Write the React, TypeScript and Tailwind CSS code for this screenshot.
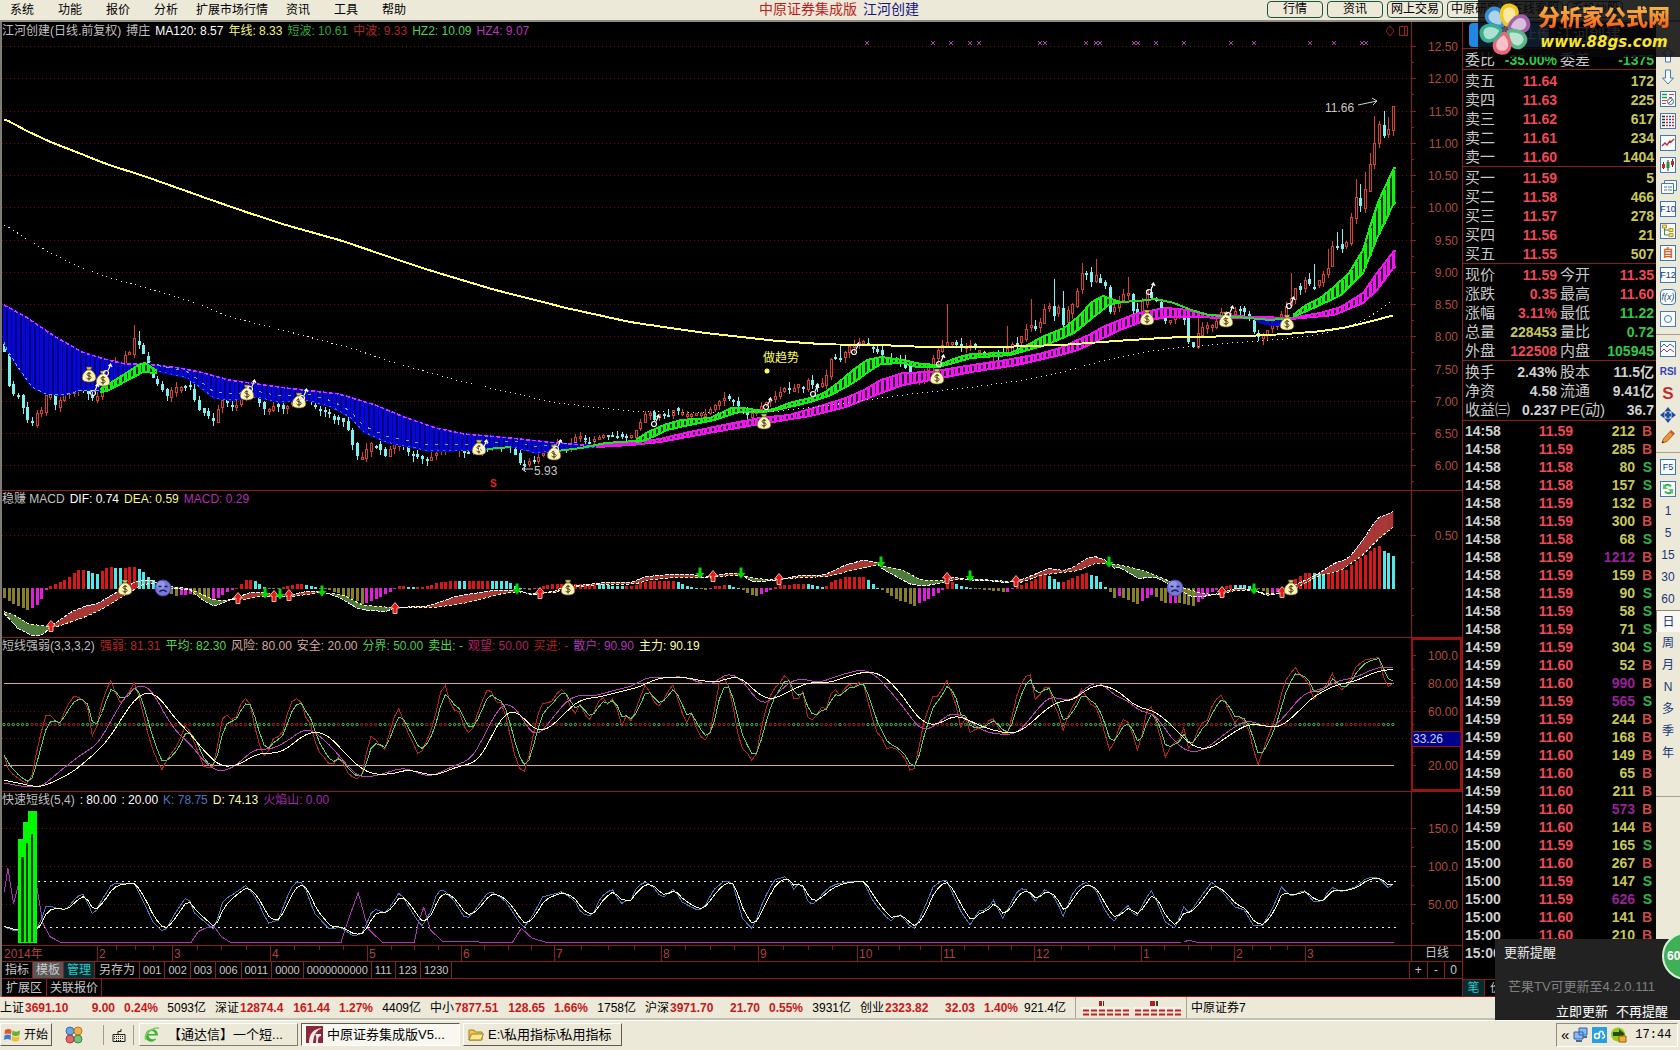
import type { ReactNode } from 'react';

type Point = [number, number];

const BAR_COUNT = 300;
const BAR_START = 4;
const BAR_STEP = 4.645;

const barX = (i: number) => BAR_START + i * BAR_STEP;

// "x,y x,y" -> points, with an optional origin and scale for the block
function parse(raw: string, x0 = 0, y0 = 0, sx = 1, sy = 1): Point[] {
  return raw
    .trim()
    .split(/\s+/)
    .map((pair) => {
      const [x, y] = pair.split(',').map(Number);
      return [x0 + x / sx, y0 + y / sy];
    });
}

function at(points: Point[], x: number): number {
  if (x <= points[0][0]) return points[0][1];
  for (let i = 1; i < points.length; i++) {
    const [x1, y1] = points[i];
    if (x <= x1) {
      const [px, py] = points[i - 1];
      return x1 === px ? y1 : py + ((y1 - py) * (x - px)) / (x1 - px);
    }
  }
  return points[points.length - 1][1];
}

const sample = (points: Point[]): number[] =>
  Array.from({ length: BAR_COUNT }, (_, i) => at(points, barX(i)));

const join = (points: Point[]) => points.map(([x, y]) => `${x.toFixed(1)},${y.toFixed(1)}`).join(' ');

const joinSeries = (ys: number[]) => join(ys.map((y, i) => [barX(i), y] as Point));

// centred three-bar mean, rounds off the corners of slow lines
const soften = (ys: number[]) => ys.map((y, i) => ((ys[i - 1] ?? y) + y + (ys[i + 1] ?? y)) / 3);

// trailing average
function smooth(ys: number[]): number[] {
  let last = ys[0];
  return ys.map((y) => {
    last = last * 0.45 + y * 0.55;
    return last;
  });
}

const noise = (i: number, seed: number) => {
  const v = Math.sin(i * 12.9898 + seed * 78.233) * 43758.5453;
  return v - Math.floor(v);
};

/* ---------- price panel ---------- */

const PRICE = parse(`4,352 8,385 14,395 20,398 23,410 27,420 32,423 37,412 42,410 46,395 50,393 55,405 60,400 65,394 80,388
  92,398 98,396 105,375 115,362 120,368 125,355 130,352 134,338 139,345 144,355 150,375 155,380 160,388 167,397 173,388
  186,387 191,387 195,402 200,412 205,413 210,417 214,422 218,408 222,400 230,405 237,405 245,388 255,395 262,408 267,411
  275,405 285,410 295,396 305,392 312,405 320,410 328,413 334,420 342,420 348,430 354,450 358,458 363,457 368,445 373,443
  380,450 386,457 392,445 400,443 405,448 410,455 418,457 424,460 432,457 440,450 450,448 460,449 467,453 475,450 483,445
  495,443 512,448 517,460 522,466 527,462 535,460 540,456 548,450 557,444 565,450 570,445 578,434 583,440 590,442 597,438
  603,435 615,436 625,438 633,435 639,425 644,415 649,412 654,420 661,412 667,418 672,410 680,412 690,415 697,413 705,415
  712,408 717,403 726,397 733,402 740,408 748,416 752,413 760,407 770,400 778,395 783,388 792,390 797,384 803,388 807,380
  815,388 820,385 825,380 830,360 835,358 839,360 845,352 850,346 857,343 863,341 870,347 880,354 890,360 900,362 908,372
  913,382 919,380 925,370 932,360 938,350 945,343 950,341 955,345 963,348 970,345 978,350 985,352 995,353 1003,355 1010,345
  1018,343 1025,330 1030,325 1034,330 1039,325 1044,310 1048,303 1053,318 1058,306 1063,325 1068,310 1072,305 1076,296
  1081,274 1086,272 1090,284 1095,275 1100,283 1104,280 1109,312 1114,308 1120,300 1125,292 1128,293 1133,312 1138,318
  1143,298 1147,290 1151,298 1156,300 1161,315 1166,322 1172,320 1178,312 1184,320 1189,345 1193,347 1198,333 1205,325
  1215,325 1220,312 1230,314 1238,310 1245,312 1250,320 1254,334 1259,338 1264,333 1270,328 1278,320 1284,310 1289,302
  1295,288 1300,290 1305,280 1310,285 1315,288 1320,278 1328,268 1333,244 1338,247 1343,249 1348,240 1352,210 1356,197
  1361,207 1366,185 1370,162 1375,140 1379,124 1384,137 1389,128 1393,106`);

// wicks that stick out well beyond the body
const SPIKES: Record<number, number> = {
  28: 8, 29: 8, 180: 10, 203: 34, 216: 20, 221: 22, 226: 24, 228: 14, 232: 8, 235: 14,
  242: 12, 257: 16, 277: 24, 282: 20, 285: 14, 287: 10, 288: 14, 291: 14, 292: 10, 293: 16, 294: 10, 295: 24, 297: 12, 298: 8,
};

const YEAR_LINE = [
  ...parse('12,356 75,393 150,430 200,450 300,493 400,527 500,565 600,603 700,640 800,675 950,720 1080,767 1200,810 1380,868 1560,917', 0, 0, 2.8, 3),
  ...parse('0,920 200,967 400,998 600,1022 740,1033 900,1035 1000,1040 1200,1042 1400,1035 1560,1023', 560, 0, 2.8, 3),
  ...parse('0,1022 150,1012 350,1008 450,1003 550,995 620,985 700,965 768,945', 1120, 0, 2.8, 3),
];

const MA120 = [
  ...parse('12,673 100,735 200,790 300,832 400,860 550,910 640,950 800,993 985,1045 1100,1087 1300,1147 1440,1180 1540,1205', 0, 0, 2.8, 3),
  ...parse('0,1210 120,1225 210,1234 400,1238 600,1235 760,1215 860,1200 1000,1180 1150,1162 1300,1140 1400,1118 1500,1088', 560, 0, 2.8, 3),
  ...parse('0,1070 120,1048 300,1030 450,1018 550,1005 640,980 700,950 768,897', 1120, 0, 2.8, 3),
];

interface Band {
  from: number;
  to: number;
  top: Point[];
  bottom: Point[];
}

const BLUE_TOP = parse('4,305 26,317 54,336 75,348 82,352 104,359 125,364 146,364 179,368 200,372 229,380 250,383 286,388 339,394 375,405 404,417 436,428 464,434 500,437 557,443 596,446');

const BLUE_BANDS: Band[] = [
  { from: 4, to: 140, top: BLUE_TOP, bottom: parse('4,342 7,350 18,367 32,387 46,394 64,395 82,390 100,391 122,377 140,366') },
  {
    from: 148,
    to: 596,
    top: BLUE_TOP,
    bottom: parse('148,366 161,372 186,377 200,387 214,398 232,400 257,397 279,402 307,400 332,407 350,417 364,432 386,442 411,447 429,451 482,450 514,447 536,453 557,450 596,447'),
  },
  { from: 1252, to: 1288, top: parse('1252,317 1291,319'), bottom: parse('1252,318 1262,323 1272,325 1282,325 1291,320') },
];

const GREEN_BANDS: Band[] = [
  { from: 100, to: 157, top: parse('100,389 112,382 128,372 138,365 145,363 157,371'), bottom: parse('100,392 107,391 128,380 143,372 157,373') },
  {
    from: 636,
    to: 1120,
    top: parse('636,440 646,433 664,425 681,420 710,418 721,413 731,408 742,408 764,411 774,409 789,403 810,398 824,393 839,382 853,370 867,360 881,357 903,360 921,364 939,365 956,358 971,354 1010,353 1024,347 1042,337 1064,328 1078,317 1092,302 1103,296 1120,302'),
    bottom: parse('636,442 646,440 667,430 689,425 714,420 739,412 764,412 781,409 810,402 831,395 853,383 871,370 881,364 903,363 917,367 939,367 971,358 1010,355 1028,350 1046,345 1074,333 1096,315 1110,304 1120,303'),
  },
  {
    from: 1293,
    to: 1396,
    top: parse('1293,315 1306,305 1320,298 1334,287 1349,273 1363,250 1370,227 1379,200 1394,168'),
    bottom: parse('1293,317 1320,305 1341,295 1363,273 1377,238 1394,203'),
  },
];

const MAGENTA_BANDS: Band[] = [
  {
    from: 596,
    to: 1396,
    top: parse('596,446 631,443 660,439 685,433 714,427 739,422 760,418 789,415 817,407 846,398 864,390 881,380 903,373 931,372 960,367 1006,360 1039,354 1060,348 1089,335 1103,327 1120,320 1138,313 1166,308 1188,310 1209,315 1256,317 1291,318 1320,313 1341,307 1363,293 1377,273 1394,251'),
    bottom: parse('596,447 631,445 660,442 714,432 760,424 810,416 846,407 881,393 903,385 931,380 971,372 1017,365 1060,355 1078,350 1120,330 1141,322 1166,317 1195,317 1224,318 1291,319 1334,315 1363,303 1377,290 1394,267'),
  },
];

const GREEN_THIN = [
  '487,449 511,447',
  '557,451 581,448 606,443 636,441',
  '1120,302 1138,301 1156,299 1174,303 1191,310 1209,315 1238,317 1270,320 1291,318',
];

function BandBars({ band, color, shade }: { band: Band; color: string; shade: string }) {
  const idx = Array.from({ length: BAR_COUNT }, (_, i) => i).filter((i) => barX(i) >= band.from - 1 && barX(i) <= band.to);
  const inner = (line: Point[]) => line.filter(([x]) => x > band.from && x < band.to);
  const top: Point[] = [[band.from, at(band.top, band.from)], ...inner(band.top), [band.to, at(band.top, band.to)]];
  const bottom: Point[] = [[band.from, at(band.bottom, band.from)], ...inner(band.bottom), [band.to, at(band.bottom, band.to)]];
  return (
    <g>
      <polygon points={join([...top, ...[...bottom].reverse()])} fill={shade} />
      {idx.map((i) => {
        const y = at(band.top, barX(i));
        return <rect key={i} x={barX(i) - 1} y={y} width={3} height={Math.max(1, at(band.bottom, barX(i)) - y)} fill={color} />;
      })}
      <polyline points={join(top)} fill="none" stroke={color} strokeWidth={2} />
      <polyline points={join(bottom)} fill="none" stroke={color} strokeWidth={2} />
    </g>
  );
}

function Candles() {
  const closes = sample(PRICE);
  return (
    <g shapeRendering="crispEdges" strokeWidth={1}>
      {closes.map((close, i) => {
        const open = (i ? closes[i - 1] : close - 12) + (noise(i, 5) - 0.5) * 5;
        const x = Math.round(barX(i)) + 0.5;
        const top = Math.min(open, close);
        const height = Math.max(2, Math.abs(open - close));
        const high = top - noise(i, 1) * 6 - (SPIKES[i] ?? 0);
        const low = top + height + noise(i, 2) * 6;
        if (close > open) {
          return (
            <g key={i}>
              <path d={`M${x} ${high}V${low}`} stroke="#7df2f2" />
              <rect x={x - 1.5} y={top} width={3} height={height} fill="#7df2f2" />
            </g>
          );
        }
        return (
          <g key={i} stroke="#d84030" fill="#000">
            <path d={`M${x} ${high}V${low}`} />
            <rect x={x - 1} y={top} width={2} height={height} />
          </g>
        );
      })}
    </g>
  );
}

function MoneyBag({ x, y }: { x: number; y: number }) {
  return (
    <g transform={`translate(${x} ${y})`}>
      <path d="M-3-8h6l-1.500 3h-3z" fill="#d8c468" stroke="#5a4a10" strokeWidth=".6" />
      <path d="M-2-5h4c2.500 1.500 4.800 4.500 4.800 7.500C6.800 6 4 7 0 7s-6.800-1-6.800-4.500C-6.800-.500-4.500-3.500-2-5z" fill="#fdf3b4" stroke="#6b5a18" strokeWidth=".7" />
      <path d="M2.200-1.200C1.500-2.200-2-2.400-2-.4c0 1.800 4.200.8 4.200 2.800C2.200 4.400-1.600 4.400-2.400 3M0-3v8.500" fill="none" stroke="#3c3410" strokeWidth="1" />
    </g>
  );
}

function MaleSign({ x, y }: { x: number; y: number }) {
  return (
    <g transform={`translate(${x} ${y})`} fill="none" stroke="#fff" strokeWidth="1.200">
      <circle cx="-1" cy="3" r="2.500" />
      <path d="M1 0.500L3.500-5M1.500-4L3.500-6L5-3" />
    </g>
  );
}

function SadFace({ x, y }: { x: number; y: number }) {
  return (
    <g transform={`translate(${x} ${y})`}>
      <circle r="8" fill="#7878dc" stroke="#4a4aa0" />
      <circle cx="-2" cy="-3" r="4" fill="#a8a8f4" opacity=".6" />
      <path d="M-4.500-1.500h3M1.500-1.500h3M-3.500 4c1.500-2.400 5.500-2.400 7 0" fill="none" stroke="#1c1c50" strokeWidth="1.400" />
    </g>
  );
}

function Arrow({ x, y, up }: { x: number; y: number; up?: boolean }) {
  return up ? (
    <path transform={`translate(${x} ${y})`} d="M0-5.500L4.500 0H2V5.500H-2V0H-4.500z" fill="#e81818" stroke="#f0b0a0" />
  ) : (
    <path transform={`translate(${x} ${y})`} d="M0 5.500L4.500 0H1.500V-5.500H-1.500V0H-4.500z" fill="#00d800" />
  );
}

const GridLines = ({ levels }: { levels: number[] }) => (
  <g shapeRendering="crispEdges" stroke="#6c1212" strokeDasharray="1 3">
    {levels.map((y) => (
      <path key={y} d={`M2 ${y}H1411`} />
    ))}
  </g>
);

const PRICE_LEVELS = Array.from({ length: 14 }, (_, i) => ({ y: Math.round(46 + i * 32.26) + 0.5, label: (12.5 - i * 0.5).toFixed(2) }));
// the last step to 6.00 sits on the panel's bottom tick
const PRICE_TICKS = PRICE_LEVELS.map((l) => l.y + 16);

const CROSS_X = [867, 933, 951, 970, 979, 1040, 1045, 1086, 1096, 1100, 1134, 1138, 1156, 1184, 1231, 1254, 1310, 1334, 1362, 1366];

const PRICE_BAGS = parse('89,375 103,379 247,393 299,401 479,448 554,453 764,422 937,377 1147,318 1226,320 1287,323');
const MALE_SIGNS = parse('94,390 107,370 251,386 303,395 483,446 557,446 655,421 767,404 814,391 855,349 940,361 1150,289 1229,312 1290,303');

function PriceChart() {
  return (
    <Plot box="2 40 1409 450">
      <GridLines levels={PRICE_LEVELS.map((l) => l.y)} />
      {CROSS_X.map((x) => (
        <path key={x} d={`M${x - 2} 41l4 4m0-4l-4 4`} stroke="#b040b8" />
      ))}
      <Candles />
      <g shapeRendering="crispEdges">
        {BLUE_BANDS.map((b) => (
          <BandBars key={b.from} band={b} color="#0606d8" shade="#000078" />
        ))}
        <polyline points={join(BLUE_TOP)} fill="none" stroke="#d838e0" strokeWidth="1.500" strokeDasharray="4 2" />
        <polyline points={join(BLUE_BANDS[0].bottom)} fill="none" stroke="#58b8d8" strokeDasharray="3 3" />
        <polyline points={join(BLUE_BANDS[1].bottom.map(([x, y]) => [x, y - 6]))} fill="none" stroke="#58b8d8" strokeDasharray="3 7" />
        <polyline points={join(BLUE_BANDS[1].bottom)} fill="none" stroke="#4070b8" strokeDasharray="2 4" />
        {MAGENTA_BANDS.map((b) => (
          <BandBars key={b.from} band={b} color="#f014f0" shade="#300030" />
        ))}
        {GREEN_BANDS.map((b) => (
          <BandBars key={b.from} band={b} color="#14f014" shade="#003000" />
        ))}
        {GREEN_THIN.map((p) => (
          <polyline key={p} points={p} fill="none" stroke="#28dc28" strokeWidth="2" />
        ))}
        <polyline points={joinSeries(soften(sample(YEAR_LINE)))} fill="none" stroke="#ffff70" strokeWidth="2" />
        <polyline points={joinSeries(soften(sample(MA120)))} fill="none" stroke="#e8e8e8" strokeDasharray="1 4" />
      </g>
      {PRICE_BAGS.map(([x, y]) => (
        <MoneyBag key={x} x={x} y={y} />
      ))}
      {MALE_SIGNS.map(([x, y]) => (
        <MaleSign key={x} x={x} y={y} />
      ))}
      <path d="M1358 105L1377 101M1372 98l5 3-4 4M522 469h11M522 469l4-3M522 469l4 3" stroke="#d0d0d0" fill="none" />
      <circle cx="767" cy="371" r="2.500" fill="#ffff50" />
      <g className="text-[12px]">
        <text x="1325" y="112" fill="#c8c8c8">11.66</text>
        <text x="534" y="475" fill="#c8c8c8">5.93</text>
        <text x="763" y="362" fill="#ffff60">做趋势</text>
      </g>
      <text x="490" y="487" fill="#e82020" className="text-[10px] font-bold">S</text>
    </Plot>
  );
}

/* ---------- MACD panel ---------- */

const MACD_BARS = [
  ...parse('12,-10 40,-17 75,-22 100,-18 120,-9 130,0 150,4 180,8 220,19 235,19 250,17 270,14 290,19 310,22 330,20 375,22 400,17 420,10 445,5 470,-3 485,-8 540,-6 580,-12 600,-12 640,-3 660,0 690,9 710,9 730,3 760,-2 800,2 840,5 880,2 900,-1 920,-2 960,-7 1000,-13 1015,-16 1060,-10 1090,-4 1120,3 1160,1 1190,2 1230,6 1270,8 1300,7 1370,8 1420,7 1445,2 1480,-2 1500,-1 1520,3 1560,5', 0, 0, 2.8),
  ...parse('0,5 100,5 170,2 210,3 240,7 320,8 350,3 385,0 415,-3 430,2 465,4 500,0 545,-9 590,-2 610,3 680,5 740,1 760,7 805,12 850,12 880,3 900,-2 930,-9 990,-18 1030,-11 1070,-2 1090,7 1130,2 1160,-1 1250,-4 1280,2 1320,8 1360,15 1400,5 1470,16 1500,12 1530,0 1550,-10', 560, 0, 2.8),
  ...parse('0,-8 50,-16 90,-6 120,-15 160,-15 205,-18 250,-5 280,0 310,4 360,3 380,0 410,-5 450,-4 470,5 520,16 570,14 600,17 640,19 650,25 690,35 725,43 740,37 768,32', 1120, 0, 2.8),
];

const DIF = [
  ...parse('12,790 50,835 90,857 120,855 140,832 200,785 240,768 270,762 330,725 380,695 420,690 450,702 480,716 530,718 570,752 600,769 640,751 700,728 745,728 800,740 850,725 900,725 950,742 1005,778 1080,785 1105,773 1200,768 1280,738 1380,722 1450,721 1490,735 1560,722', 0, 350, 2.8, 3),
  ...parse('0,712 40,708 130,697 200,697 240,680 320,672 380,675 400,683 460,672 500,670 540,695 600,692 680,675 740,675 800,645 850,630 890,638 900,655 980,702 1020,708 1075,697 1100,682 1150,690 1200,692 1250,698 1290,690 1370,655 1410,662 1440,650 1475,625 1500,620 1530,632 1550,655', 560, 350, 2.8, 3),
  ...parse('0,652 50,685 100,682 150,710 200,740 230,740 270,732 320,716 370,718 410,736 450,730 470,715 550,675 600,640 640,625 680,570 720,505 750,492 768,482', 1120, 350, 2.8, 3),
];

const DEA = [
  ...parse('12,785 40,795 80,822 130,829 160,830 240,800 290,775 350,735 400,703 450,698 480,710 530,716 600,750 640,750 690,748 730,738 800,741 850,735 900,727 960,735 1015,765 1100,773 1220,772 1300,760 1400,732 1450,725 1490,731 1560,727', 0, 350, 2.8, 3),
  ...parse('0,716 40,711 130,702 210,702 250,690 330,682 400,684 500,675 545,685 600,690 680,682 750,680 820,660 890,645 960,660 1010,690 1070,692 1100,690 1150,686 1200,690 1250,694 1290,697 1350,675 1400,668 1450,662 1500,640 1530,640', 560, 350, 2.8, 3),
  ...parse('0,645 60,660 120,685 180,715 230,730 270,735 320,722 370,720 410,732 450,731 480,722 550,680 620,660 680,615 720,570 768,528', 1120, 350, 2.8, 3),
];

const BUY_ARROWS = parse('51,626 238,598 274,596 289,595 395,608 540,593 713,576 779,579 947,578 1016,581 1222,592 1282,592');
const SELL_ARROWS = parse('265,593 280,594 322,591 517,589 700,573 741,573 881,562 970,576 1109,562 1254,589');

function MacdChart() {
  const bars = sample(MACD_BARS);
  const dif = sample(DIF);
  const dea = sample(DEA);
  return (
    <Plot box="2 507 1409 130">
      <GridLines levels={[535.5]} />
      {dif.slice(1).map((y, i) => (
        <polygon
          key={i}
          points={`${barX(i)},${dif[i]} ${barX(i + 1) + 0.5},${y} ${barX(i + 1) + 0.5},${dea[i + 1]} ${barX(i)},${dea[i]}`}
          fill={y < dea[i + 1] ? '#a83838' : '#507c40'}
        />
      ))}
      <g shapeRendering="crispEdges">
        {bars.map((h, i) => {
          const rising = h >= (i ? bars[i - 1] : h + 1);
          const color = h >= 0 ? (rising ? '#d81818' : '#50e8e8') : rising ? '#e020d8' : '#888028';
          const size = Math.max(1, Math.abs(h));
          return <rect key={i} x={barX(i) - 1} y={h >= 0 ? 588.5 - size : 588} width={3} height={size} fill={color} />;
        })}
        <polyline points={joinSeries(dea)} fill="none" stroke="#ffff90" strokeDasharray="3 2" />
        <polyline points={joinSeries(dif)} fill="none" stroke="#f4f4f4" strokeDasharray="4 1" />
      </g>
      {BUY_ARROWS.map(([x, y]) => (
        <Arrow key={x} x={x} y={y} up />
      ))}
      {SELL_ARROWS.map(([x, y]) => (
        <Arrow key={x} x={x} y={y} />
      ))}
      {[125, 568, 1291].map((x) => (
        <MoneyBag key={x} x={x} y={588} />
      ))}
      {[163, 1175].map((x) => (
        <SadFace key={x} x={x} y={588} />
      ))}
    </Plot>
  );
}

/* ---------- strength panel ---------- */

const STRENGTH = [
  ...parse('10,345 20,395 50,425 65,435 75,370 85,300 103,212 115,235 130,252 145,200 163,165 180,180 190,195 200,290 212,255 225,170 243,117 255,175 263,190 280,160 293,125 305,180 320,270 335,340 353,390 365,355 385,318 395,290 405,250 420,295 435,350 448,392 460,375 468,385 478,270 487,223 498,225 505,240 515,230 530,172 542,180 550,220 560,300 578,355 590,315 600,280 608,295 618,270 628,210 640,172 655,182 665,230 680,260 690,330 705,350 717,372 727,372 740,345 755,395 775,420 790,400 798,340 810,278 822,310 840,330 855,240 870,203 885,270 900,310 913,352 930,300 945,250 958,160 973,130 983,210 1003,215 1015,285 1030,265 1045,200 1065,137 1080,185 1095,190 1105,250 1120,340 1135,398 1145,392 1155,330 1165,260 1178,190 1200,188 1220,145 1235,165 1250,237 1260,180 1270,215 1287,245 1300,190 1312,170 1325,195 1340,165 1350,268 1365,225 1375,243 1390,190 1402,140 1410,130 1420,180 1437,200 1455,155 1468,130 1480,200 1495,250 1505,215 1518,270 1533,305 1545,285 1555,220 1565,130', 0, 640, 2.178, 3),
  ...parse('0,125 12,112 22,150 32,230 45,325 55,328 68,363 80,340 92,250 105,180 118,145 130,130 147,92 157,175 170,178 180,150 190,230 205,243 220,200 230,212 240,165 252,148 260,170 280,130 290,145 310,118 325,200 340,275 350,285 362,325 380,322 393,340 405,360 412,390 422,395 432,330 445,240 465,165 478,170 493,115 505,160 515,200 525,265 533,225 545,278 560,265 575,260 593,230 605,260 622,295 632,260 640,200 650,150 660,120 675,93 685,180 700,160 714,125 725,190 735,210 747,272 760,220 775,185 790,140 803,190 818,200 830,240 848,330 862,300 872,250 882,233 895,260 908,335 920,280 930,210 940,200 955,270 970,352 985,310 1000,300 1008,250 1020,325 1035,300 1045,250 1060,245 1075,185 1092,165 1105,200 1120,250 1133,230 1148,250 1160,320 1173,378 1185,320 1200,270 1215,210 1228,130 1240,105 1253,82 1265,110 1280,120 1295,185 1305,150 1320,140 1335,97 1345,140 1355,150 1370,130 1385,80 1405,60 1435,52 1445,110 1455,140 1465,130', 720, 640, 2.178, 3),
];

const MAIN_FORCE = [
  ...parse('10,420 85,443 110,430 160,395 225,318 250,270 285,190 310,158 330,155 350,175 380,235 410,275 440,325 470,370 490,382 520,375 560,340 600,340 625,328 655,290 685,273 715,285 745,330 780,380 810,403 850,403 890,388 920,400 950,407 985,385 1040,365 1060,320 1090,235 1115,208 1130,215 1155,260 1178,278 1210,250 1240,205 1265,178 1310,170 1350,155 1390,143 1430,115 1480,110 1530,122 1565,130', 0, 640, 2.178, 3),
  ...parse('0,122 35,108 55,120 75,155 110,182 150,155 190,128 240,128 280,108 325,92 360,110 400,170 430,235 465,260 490,240 515,225 540,240 580,265 635,283 665,265 700,220 735,183 770,182 800,145 830,132 870,155 905,200 945,212 980,250 1020,310 1050,330 1075,320 1120,275 1155,250 1185,257 1215,265 1245,235 1290,172 1340,135 1380,125 1435,92 1465,88', 720, 640, 2.178, 3),
];

const RETAIL = [
  ...parse('10,428 50,440 90,442 120,405 175,345 215,312 250,220 285,145 310,132 330,145 355,215 385,280 415,310 440,360 475,398 510,382 555,325 590,330 630,300 665,262 700,290 735,340 770,400 790,415 830,403 880,382 935,412 985,380 1030,355 1060,270 1090,195 1105,182 1130,215 1165,300 1200,240 1235,180 1260,163 1290,170 1340,150 1375,140 1410,110 1450,115 1485,108 1545,138 1565,125', 0, 640, 2.178, 3),
  ...parse('0,105 25,100 50,120 75,175 98,198 130,155 150,125 180,115 215,130 250,110 310,87 340,105 375,160 410,220 435,270 450,273 480,245 505,213 530,230 575,275 620,285 650,280 690,210 718,165 745,180 775,180 795,140 828,123 860,170 890,180 915,220 945,215 980,290 1010,330 1035,340 1065,320 1110,270 1150,238 1200,268 1230,230 1270,160 1310,148 1345,122 1380,115 1435,80 1465,82', 720, 640, 2.178, 3),
];

function StrengthChart() {
  const fast = sample(STRENGTH);
  const average = smooth(fast);
  return (
    <Plot box="2 654 1409 137">
      <GridLines levels={[711.5, 738.5]} />
      <path d="M4 683.500H1394M4 765.500H1394" stroke="#dca0a0" strokeWidth="1" shapeRendering="crispEdges" />
      {fast.map((y, i) => (
        <circle key={i} cx={barX(i)} cy="724.500" r="1.200" fill="none" stroke={y < average[i] ? '#b83030' : '#50d050'} strokeWidth=".9" />
      ))}
      <g fill="none" shapeRendering="crispEdges">
        <polyline points={joinSeries(fast)} stroke="#c02018" />
        <polyline points={joinSeries(average)} stroke="#50d850" />
        <polyline points={joinSeries(soften(soften(sample(RETAIL))))} stroke="#c040c0" />
        <polyline points={joinSeries(soften(soften(sample(MAIN_FORCE))))} stroke="#ffffa0" />
      </g>
    </Plot>
  );
}

/* ---------- fast KD panel ---------- */

const K_LINE = [
  ...parse('12,680 40,692 100,690 115,660 130,615 160,625 185,630 215,590 235,582 262,650 285,600 315,550 375,550 395,590 430,670 460,698 490,640 525,585 545,640 600,690 625,600 650,585 690,555 720,600 750,670 780,660 800,600 825,545 850,550 880,640 925,690 950,680 990,708 1015,700 1045,625 1080,640 1120,575 1150,630 1180,680 1205,640 1225,575 1240,567 1270,600 1305,660 1330,630 1370,572 1400,590 1420,610 1465,685 1490,650 1520,590 1560,580', 0, 700, 2.8, 3),
  ...parse('0,572 40,600 60,640 90,650 110,600 125,580 155,565 165,618 185,600 195,610 215,560 240,545 265,565 285,595 320,565 340,605 380,628 400,628 430,570 465,538 485,555 510,655 540,688 570,600 600,540 635,528 655,570 675,540 690,600 710,615 740,575 765,555 805,545 850,545 880,610 925,665 950,640 990,690 1010,650 1045,560 1080,535 1120,630 1148,675 1175,630 1195,630 1213,600 1240,655 1285,565 1310,570 1330,605 1360,565 1390,600 1408,650 1440,570 1470,545 1500,570 1530,640 1550,665', 560, 700, 2.8, 3),
  ...parse('0,640 22,615 45,655 70,600 88,572 110,620 125,665 155,685 178,620 195,640 220,600 258,545 290,580 325,625 345,625 375,680 400,675 430,620 452,560 480,590 515,570 545,608 570,600 590,560 620,575 660,560 690,535 720,530 755,568 765,550', 1120, 700, 2.8, 3),
];

const FLAME = [
  ...parse('12,575 22,505 38,612 50,560 100,540 120,670 140,710 170,727 535,727 555,695 580,682 600,680 620,710 645,727 955,727 975,660 1003,578 1030,685 1070,727 1160,727 1173,660 1187,622 1205,690 1240,725 1435,727 1460,685 1490,715 1530,727', 0, 700, 2.8, 3),
  ...parse('0,727 180,726 193,720 215,727 766,727', 1120, 700, 2.8, 3),
];

function FastChart() {
  const k = sample(K_LINE);
  const d = smooth(k);
  return (
    <Plot box="2 808 1409 137">
      <GridLines levels={[828.5, 866.5, 904.5]} />
      <g shapeRendering="crispEdges" fill="none">
        <path d="M38 881.500H1396M38 927.500H1396" stroke="#f0f0f0" strokeDasharray="2 4" />
        <polyline points={join(FLAME)} stroke="#b030b8" />
        <polyline points={joinSeries(k)} stroke="#4878c0" />
        <polyline points={joinSeries(d)} stroke="#f8ffa8" />
        <path d="M18 943V839H23V822H28V811H37V943z" fill="#00f800" />
        <path d="M21 942V857h3v85zM26 942V843h2v99zM31 942V834h2v108z" fill="#003c00" />
      </g>
    </Plot>
  );
}

/* ---------- panel frame ---------- */

function Plot({ box, children }: { box: string; children: ReactNode }) {
  return (
    <svg viewBox={box} preserveAspectRatio="none" className="block min-h-0 w-full flex-1 overflow-hidden">
      {children}
    </svg>
  );
}

interface Label {
  y: number;
  label: string;
}

function Axis({ top, height, labels, minors = [], active }: { top: number; height: number; labels: Label[]; minors?: number[]; active?: boolean }) {
  return (
    <svg viewBox={`0 ${top} 51 ${height}`} preserveAspectRatio="none" className="block h-full w-[51px] shrink-0">
      {active ? (
        <rect x="1" y={top + 1} width="49" height={height - 2} fill="none" stroke="#a01010" strokeWidth="2" />
      ) : (
        <path d={`M.5 ${top}V${top + height}`} stroke="#8c1c1c" />
      )}
      {minors.map((y) => (
        <path key={y} d={`M0 ${y}h3`} stroke="#8c1c1c" />
      ))}
      {labels.map(({ y, label }) => (
        <g key={label}>
          <path d={`M0 ${y}h5`} stroke="#8c1c1c" />
          <text x="47" y={y + 4} textAnchor="end" fill="#b04c3c" className="text-[12px]">
            {label}
          </text>
        </g>
      ))}
      {active && (
        <g>
          <rect x="1" y="731.500" width="49" height="15" fill="#00008c" stroke="#a01010" />
          <text x="2" y="743" fill="#c8d4f0" className="text-[12px]">
            33.26
          </text>
        </g>
      )}
    </svg>
  );
}

interface Legend {
  text: string;
  color: string;
}

function Panel({ legend, chart, axis, extra, tall }: { legend: Legend[]; chart: ReactNode; axis: ReactNode; extra?: ReactNode; tall?: boolean }) {
  return (
    <section className="flex min-h-0 border-b border-[#8c1c1c]">
      <div className="flex min-h-0 min-w-0 flex-1 flex-col">
        <div className={`flex shrink-0 items-center gap-[5px] whitespace-nowrap leading-none ${tall ? 'h-[18px]' : 'h-4'}`}>
          {legend.map((item) => (
            <span key={item.text} className={item.color}>
              {item.text}
            </span>
          ))}
          {extra}
        </div>
        {chart}
      </div>
      {axis}
    </section>
  );
}

const PRICE_LEGEND: Legend[] = [
  { text: '江河创建(日线.前复权)', color: 'text-[#c0c0c0]' },
  { text: '搏庄', color: 'text-[#c0c0c0]' },
  { text: 'MA120: 8.57', color: 'text-white' },
  { text: '年线: 8.33', color: 'text-[#f4f480]' },
  { text: '短波: 10.61', color: 'text-[#30a838]' },
  { text: '中波: 9.33', color: 'text-[#b02820]' },
  { text: 'HZ2: 10.09', color: 'text-[#50d050]' },
  { text: 'HZ4: 9.07', color: 'text-[#b838b8]' },
];

const MACD_LEGEND: Legend[] = [
  { text: '稳赚 MACD', color: 'text-[#c0c0c0]' },
  { text: 'DIF: 0.74', color: 'text-white' },
  { text: 'DEA: 0.59', color: 'text-[#f4f490]' },
  { text: 'MACD: 0.29', color: 'text-[#b030b0]' },
];

const STRENGTH_LEGEND: Legend[] = [
  { text: '短线强弱(3,3,3,2)', color: 'text-[#c0c0c0]' },
  { text: '强弱: 81.31', color: 'text-[#b82820]' },
  { text: '平均: 82.30', color: 'text-[#50d850]' },
  { text: '风险: 80.00', color: 'text-[#d8a8a0]' },
  { text: '安全: 20.00', color: 'text-[#d8a8a0]' },
  { text: '分界: 50.00', color: 'text-[#50c850]' },
  { text: '卖出: -', color: 'text-[#50d850]' },
  { text: '观望: 50.00', color: 'text-[#b02060]' },
  { text: '买进: -', color: 'text-[#b02020]' },
  { text: '散户: 90.90', color: 'text-[#b038b8]' },
  { text: '主力: 90.19', color: 'text-[#ffffa0]' },
];

const FAST_LEGEND: Legend[] = [
  { text: '快速短线(5,4)', color: 'text-[#c0c0c0]' },
  { text: ': 80.00', color: 'text-white' },
  { text: ': 20.00', color: 'text-white' },
  { text: 'K: 78.75', color: 'text-[#4878c0]' },
  { text: 'D: 74.13', color: 'text-[#ffffa0]' },
  { text: '火焰山: 0.00', color: 'text-[#a828b0]' },
];

const MONTHS: [number, string][] = [
  [97, '2'], [172, '3'], [270, '4'], [367, '5'], [461, '6'], [554, '7'], [661, '8'], [758, '9'],
  [857, '10'], [941, '11'], [1034, '12'], [1141, '1'], [1234, '2'], [1305, '3'],
];

function DateAxis() {
  return (
    <div className="flex h-4 shrink-0 border-b border-[#8c1c1c]">
      <svg viewBox="2 946 1409 15" preserveAspectRatio="none" className="block h-full min-w-0 flex-1">
        <text x="4" y="958" fill="#b04040" className="text-[12px]">
          2014年
        </text>
        {MONTHS.map(([x, label], i) => {
          const next = MONTHS[i + 1]?.[0] ?? x;
          return (
            <g key={x} stroke="#8c1c1c">
              <path d={`M${x + 0.5} 946v15`} />
              {next > x && [1, 2, 3].map((n) => <path key={n} d={`M${Math.round(x + ((next - x) * n) / 4) + 0.5} 946v4`} />)}
              <text x={x + 2} y="958" fill="#b04040" stroke="none" className="text-[12px]">
                {label}
              </text>
            </g>
          );
        })}
      </svg>
      <div className="w-[51px] border-l border-[#8c1c1c] text-center leading-[15px] text-[#c8c8c8]">日线</div>
    </div>
  );
}

const TEMPLATES = ['001', '002', '003', '006', '0011', '0000', '0000000000', '111', '123', '1230'];

function TabRows() {
  const cell = 'border-r border-[#8c1c1c] leading-4';
  return (
    <>
      <div className="flex h-[17px] shrink-0 border-b border-[#8c1c1c] text-[#c8c8c8]">
        <button className={`${cell} px-[3px]`}>指标</button>
        <button className={`${cell} bg-[#585858] px-[3px]`}>模板</button>
        <button className={`${cell} bg-[#062c30] px-[3px] text-[#30c8c8]`}>管理</button>
        <button className={`${cell} px-1`}>另存为</button>
        {TEMPLATES.map((name) => (
          <button key={name} className={`${cell} px-[3px] text-[11px]`}>
            {name}
          </button>
        ))}
        <div className="ml-auto flex w-[53px] border-l border-[#8c1c1c]">
          <button className={`${cell} flex-1`}>+</button>
          <button className={`${cell} flex-1`}>-</button>
          <button className="flex-1 leading-4">0</button>
        </div>
      </div>
      <div className="flex h-[18px] shrink-0 border-b border-[#a01010] text-[#c8c8c8]">
        <button className={`${cell} px-1`}>扩展区</button>
        <button className={`${cell} px-[3px]`}>关联报价</button>
      </div>
    </>
  );
}

/* ---------- quote panel ---------- */

const ASKS = [['卖五', '11.64', '172'], ['卖四', '11.63', '225'], ['卖三', '11.62', '617'], ['卖二', '11.61', '234'], ['卖一', '11.60', '1404']];
const BIDS = [['买一', '11.59', '5'], ['买二', '11.58', '466'], ['买三', '11.57', '278'], ['买四', '11.56', '21'], ['买五', '11.55', '507']];

const RED = 'text-[#f04858]';
const GREEN = 'text-[#30c848]';
const YELLOW = 'text-[#c8c858]';
const WHITE = 'text-[#d0d0d0]';

const STATS = [
  ['现价', '11.59', RED, '今开', '11.35', RED],
  ['涨跌', '0.35', RED, '最高', '11.60', RED],
  ['涨幅', '3.11%', RED, '最低', '11.22', GREEN],
  ['总量', '228453', YELLOW, '量比', '0.72', GREEN],
  ['外盘', '122508', RED, '内盘', '105945', GREEN],
];

const FUNDAMENTALS = [
  ['换手', '2.43%', WHITE, '股本', '11.5亿', WHITE],
  ['净资', '4.58', WHITE, '流通', '9.41亿', WHITE],
  ['收益㈢', '0.237', WHITE, 'PE(动)', '36.7', WHITE],
];

const TICKS = `14:58 11.59 212 B|14:58 11.59 285 B|14:58 11.58 80 S|14:58 11.58 157 S|14:58 11.59 132 B|14:58 11.59 300 B
|14:58 11.58 68 S|14:58 11.59 1212 B|14:58 11.59 159 B|14:58 11.59 90 S|14:58 11.59 58 S|14:58 11.59 71 S
|14:59 11.59 304 S|14:59 11.60 52 B|14:59 11.60 990 B|14:59 11.59 565 S|14:59 11.59 244 B|14:59 11.60 168 B
|14:59 11.60 149 B|14:59 11.60 65 B|14:59 11.60 211 B|14:59 11.60 573 B|14:59 11.60 144 B|15:00 11.59 165 S
|15:00 11.60 267 B|15:00 11.59 147 S|15:00 11.59 626 S|15:00 11.60 141 B|15:00 11.60 210 B|15:00 11.60 86 B`
  .split('|')
  .map((row) => row.trim().split(' '));

function OrderRows({ rows }: { rows: string[][] }) {
  return (
    <div className="shrink-0 border-t border-[#8c1c1c] pt-px">
      <table className="w-full table-fixed">
        <tbody>
          {rows.map(([name, price, volume]) => (
            <tr key={name} className="h-[19px]">
              <th className="w-[46px] p-0 pl-[2px] text-left text-[15px] font-normal text-[#c8c8c8]">{name}</th>
              <td className={`w-[48px] p-0 text-right ${RED}`}>{price}</td>
              <td className={`p-0 pr-[2px] text-right ${YELLOW}`}>{volume}</td>
            </tr>
          ))}
        </tbody>
      </table>
    </div>
  );
}

function StatRows({ rows }: { rows: string[][] }) {
  return (
    <div className="border-t border-[#8c1c1c] pt-px">
      {rows.map(([name, value, color, name2, value2, color2]) => (
        <div key={name} className="flex h-[19px] items-center justify-between pl-[2px] pr-[2px] leading-none">
          <div className="flex w-[92px] items-center justify-between">
            <span className="text-[15px] font-normal text-[#c8c8c8]">{name}</span>
            <span className={color}>{value}</span>
          </div>
          <div className="flex w-[94px] items-center justify-between">
            <span className="text-[15px] font-normal text-[#c8c8c8]">{name2}</span>
            <span className={color2}>{value2}</span>
          </div>
        </div>
      ))}
    </div>
  );
}

function QuotePanel() {
  return (
    <aside className="flex w-[194px] shrink-0 flex-col overflow-hidden border-l border-[#8c1c1c] text-[14px] font-bold leading-none">
      <div className="flex h-[27px] shrink-0 items-center gap-2 border-b border-[#8c1c1c] pl-[6px]">
        <span className="flex h-6 w-20 items-center justify-end rounded bg-[#2088e0] text-[12px] font-normal text-white">拖拽上传</span>
        <span className="text-[16px] font-normal text-[#c8c8c8]">江河创建</span>
      </div>
      <div className="flex h-5 shrink-0 items-center justify-between pl-[2px] pr-[2px] pt-px">
        <div className="flex w-[92px] items-center justify-between">
          <span className="text-[15px] font-normal text-[#c8c8c8]">委比</span>
          <span className={GREEN}>-35.00%</span>
        </div>
        <div className="flex w-[94px] items-center justify-between">
          <span className="text-[15px] font-normal text-[#c8c8c8]">委差</span>
          <span className={GREEN}>-1375</span>
        </div>
      </div>
      <OrderRows rows={ASKS} />
      <OrderRows rows={BIDS} />
      <StatRows rows={STATS} />
      <div className="pb-px">
        <StatRows rows={FUNDAMENTALS} />
      </div>
      <div className="min-h-0 flex-1 overflow-hidden border-t border-[#8c1c1c] pt-px">
        <table className="w-full table-fixed">
          <tbody>
            {TICKS.map(([time, price, volume, side], i) => (
              <tr key={i} className="h-[18px]">
                <td className="w-[46px] p-0 pl-[2px] text-[#d0d0d0]">{time}</td>
                <td className={`w-16 p-0 text-right ${RED}`}>{price}</td>
                <td className={`p-0 text-right ${Number(volume) > 500 ? 'text-[#982098]' : YELLOW}`}>{volume}</td>
                <td className={`w-[21px] p-0 pr-1 text-right ${side === 'B' ? 'text-[#d04848]' : 'text-[#28b848]'}`}>{side}</td>
              </tr>
            ))}
          </tbody>
        </table>
      </div>
      <div className="flex h-[18px] shrink-0 border-y border-[#8c1c1c] text-[12px] font-normal text-[#c8c8c8]">
        <button className="w-[22px] border-r border-[#8c1c1c] bg-[#062c30] text-[#30c8c8]">笔</button>
        <button className="w-[22px]">价</button>
      </div>
    </aside>
  );
}

/* ---------- side tool strip ---------- */

const Frame = ({ children }: { children?: ReactNode }) => (
  <svg width="16" height="16" viewBox="0 0 16 16" fill="none">
    <rect x=".5" y=".5" width="15" height="15" fill="#f8fbff" stroke="#4878b0" />
    {children}
  </svg>
);

const Boxed = ({ text }: { text: string }) => (
  <span className="flex h-4 w-4 items-center justify-center border border-[#3c78b0] bg-[#f8fbff] text-[9px] leading-none text-[#103c80]">{text}</span>
);

const TOP_TOOLS: [string, ReactNode][] = [
  ['上移', <svg key="i" width="14" height="16" viewBox="0 0 14 16" fill="#f4f8ff" stroke="#4878b0"><path d="M7 1l5.500 6H9.500v8h-5V7H1.500z" /></svg>],
  ['下移', <svg key="i" width="14" height="16" viewBox="0 0 14 16" fill="#f4f8ff" stroke="#4878b0"><path d="M7 15l5.500-6H9.500V1h-5v8H1.500z" /></svg>],
  ['自选报价', <Frame key="i"><path d="M2 3.500h5M2 6.500h5" stroke="#20a040" strokeWidth="1.500" /><path d="M9 3.500h5M9 6.500h3M2 9.500h5M2 12.500h4" stroke="#d04040" strokeWidth="1.200" /><circle cx="10.500" cy="10.500" r="3" stroke="#506880" /><path d="M8 13l5-5" stroke="#506880" /></Frame>],
  ['报价列表', <Frame key="i"><path d="M2 3.500h3M2 6.500h3M2 9.500h3M2 12.500h3" stroke="#303030" strokeWidth="1.500" /><path d="M6 3.500h2M6 6.500h2M6 9.500h2M6 12.500h2M12 3.500h2M12 6.500h2M12 9.500h2M12 12.500h2" stroke="#c03030" strokeWidth="1.500" /><path d="M9 3.500h2M9 6.500h2M9 9.500h2M9 12.500h2" stroke="#2040c0" strokeWidth="1.500" /></Frame>],
  ['分时图', <Frame key="i"><path d="M2 11l3-3 2 2 3-4 1 1 3-3" stroke="#c02828" strokeWidth="1.300" /></Frame>],
  ['K线图', <Frame key="i"><path d="M3.500 5v7M8 3v11M12.500 2v8" stroke="#303030" /><path d="M2 7h3v4H2zM11 4h3v4h-3z" fill="#d02020" /><path d="M6.500 5h3v6h-3z" fill="#209030" /></Frame>],
  ['多窗口', <svg key="i" width="17" height="16" viewBox="0 0 17 16" fill="#f8fbff" stroke="#4878b0"><path d="M4.500 1.500h12v10h-12z" /><path d="M1.500 4.500h12v10h-12z" /><path d="M4 8h3M8 8h4M4 11h3M8 11h4" /></svg>],
  ['基本资料', <Boxed key="i" text="F10" />],
  ['板块', <Frame key="i"><path d="M4.500 4v8H9M4.500 7H9" stroke="#508050" /><path d="M2.500 2h4v3h-4zM9 5.500h4v3H9zM9 10.500h4v3H9z" fill="#f8e060" stroke="#b89820" /></Frame>],
  ['自选股', <span key="i" className="flex h-4 w-4 items-center justify-center border border-[#3c78b0] bg-[#f8fbff] text-[11px] font-bold leading-none text-[#d86020]">自</span>],
  ['委托', <Boxed key="i" text="F12" />],
  ['公式', <span key="i" className="flex h-4 w-4 items-center justify-center rounded border border-[#3c78b0] bg-[#f8fbff] text-[9px] italic leading-none text-[#205060]">f(x)</span>],
  ['圆形', <Frame key="i"><circle cx="8" cy="8" r="3.500" stroke="#4878b0" /></Frame>],
];

const MID_TOOLS: [string, ReactNode][] = [
  ['指标', <Frame key="i"><path d="M1 6l3-3 3 3 3-3 4 3" stroke="#3060c0" /><path d="M1 11l3-3 3 3 3-3 4 3" stroke="#c03060" /></Frame>],
  ['RSI', <span key="i" className="text-[10px] font-bold text-[#3040c0]">RSI</span>],
  ['资金', <span key="i" className="text-[17px] font-bold leading-none text-[#b83030]">S</span>],
  ['移动', <svg key="i" width="16" height="16" viewBox="0 0 16 16" fill="#1c50a8"><path d="M8 0l3.500 4.500H4.500zM8 16l3.500-4.500H4.500zM0 8l4.500-3.500v7zM16 8l-4.500-3.500v7zM6.500 5h3v6h-3zM5 6.500h6v3H5z" /></svg>],
  ['画线', <svg key="i" width="16" height="16" viewBox="0 0 16 16"><path d="M2 14l1.500-4.500L11 1.500l3.500 3L7 12.500z" fill="#e89838" stroke="#985018" strokeWidth=".8" /><path d="M11 1.500l3.500 3-1.500 1.600-3.400-3z" fill="#c85848" /><path d="M2 14l.6-2 1.500 1.300z" fill="#302010" /></svg>],
];

const PERIODS = ['1', '5', '15', '30', '60', '日', '周', '月', 'N', '多', '季', '年'];

function ToolStrip() {
  const item = 'flex h-[22px] w-full shrink-0 items-center justify-center';
  const rule = <div className="flex h-2 w-full shrink-0 items-center"><div className="h-px w-full bg-[#a8a090]" /></div>;
  return (
    <nav className="flex w-6 shrink-0 flex-col items-center overflow-hidden bg-[#ece9d8] pt-[22px]">
      {TOP_TOOLS.map(([name, icon]) => (
        <button key={name} aria-label={name} className={item}>{icon}</button>
      ))}
      {rule}
      {MID_TOOLS.map(([name, icon]) => (
        <button key={name} aria-label={name} className={item}>{icon}</button>
      ))}
      {rule}
      <button className={item}><Boxed text="F5" /></button>
      <button aria-label="刷新" className={item}>
        <Frame><path d="M4 6c1.500-3 5-3 7-.500M12 10c-1.500 3-5 3-7 .500" stroke="#38b048" strokeWidth="2" /><path d="M3 3v5h5zM13 13V8H8z" fill="#58c860" /></Frame>
      </button>
      {PERIODS.map((p) => (
        <button key={p} className={`${item} text-[12px] text-[#183878] ${p === '日' ? 'border-l border-t border-[#908878] bg-[#faf8f0]' : ''}`}>
          {p}
        </button>
      ))}
      <div className="mt-8 h-px w-full shrink-0 bg-[#a8a090]" />
    </nav>
  );
}

/* ---------- menu, status bar, taskbar ---------- */

const MENU = ['系统', '功能', '报价', '分析', '扩展市场行情', '资讯', '工具', '帮助'];
const SHORTCUTS = ['行情', '资讯', '网上交易', '中原研究', '在线客服', '手机炒股'];

function MenuBar() {
  return (
    <header className="flex h-[22px] shrink-0 items-stretch border-b-2 border-[#908c80] bg-[#ece9d8] text-black">
      <nav className="-ml-0.5 flex flex-1">
        {MENU.map((item) => (
          <button key={item} className="min-w-12 px-1.5 leading-[18px]">{item}</button>
        ))}
      </nav>
      <h1 className="flex gap-[6px] px-1 text-[14px] leading-[18px]">
        <span className="text-[#c01c1c]">中原证券集成版</span>
        <span className="text-[#141480]">江河创建</span>
      </h1>
      <div className="flex flex-1 justify-end gap-1 pt-px">
        {SHORTCUTS.map((item) => (
          <button key={item} className="h-[17px] w-14 whitespace-nowrap rounded-sm border border-[#205040] leading-[15px]">{item}</button>
        ))}
        <div className="w-[53px]" />
      </div>
    </header>
  );
}

const INDICES = [
  ['上证', '3691.10', '9.00', '0.24%', '5093亿'],
  ['深证', '12874.4', '161.44', '1.27%', '4409亿'],
  ['中小', '7877.51', '128.65', '1.66%', '1758亿'],
  ['沪深', '3971.70', '21.70', '0.55%', '3931亿'],
  ['创业', '2323.82', '32.03', '1.40%', '921.4亿'],
];

function StatusBar() {
  return (
    <footer className="flex h-[23px] shrink-0 items-center border-b-2 border-[#c4c0b0] bg-[#ece9d8] text-black">
      {INDICES.map(([name, price, change, percent, amount]) => (
        <div key={name} className="grid w-[215px] grid-cols-[25px_48px_42px_43px_48px] text-right">
          <span className="text-left">{name}</span>
          <span className="text-left font-bold text-[#c81818]">{price}</span>
          <span className="font-bold text-[#c81818]">{change}</span>
          <span className="font-bold text-[#c81818]">{percent}</span>
          <span>{amount}</span>
        </div>
      ))}
      <div className="flex h-full items-center border-x border-[#a8a498] px-[5px]">
        <svg width="100" height="16" viewBox="0 0 100 16">
          <path d="M0 8h48M52 8h48" stroke="#fff" />
          <path d="M2 10.500h46M54 10.500h46M2 14.500h46M54 14.500h46" stroke="#c82020" strokeWidth="2" strokeDasharray="6 2" />
          <path d="M18 1h3v5h-3zM69 1h5v5h-5z" fill="#b02020" />
          <path d="M22 1h1v5h-1zM75 1h2v5h-2z" fill="#205020" />
        </svg>
      </div>
      <span className="pl-1">中原证券7</span>
    </footer>
  );
}

const TASK = 'flex h-[23px] w-[159px] items-center gap-2 border px-1 text-[13px] leading-none';

function Taskbar() {
  return (
    <footer className="flex h-[30px] shrink-0 items-center border-t border-white bg-[#ece9d8] pb-[2px] text-black">
      <button className="flex h-[23px] items-center gap-[3px] border border-b-[#605c50] border-l-white border-r-[#605c50] border-t-white px-[3px] text-[12px]">
        <svg width="17" height="17" viewBox="0 0 17 17">
          <path d="M1 4c2.500-1.500 4.500-1.500 6.500 0L7 8.500c-2-1.500-4-1.500-6.500 0z" fill="#e05828" />
          <path d="M8.500 4.500c2.500 1.500 5 1.500 7.500 0L15.500 9c-2.500 1.500-5 1.500-7.500 0z" fill="#68b030" />
          <path d="M.5 9.500c2.500-1.500 4.500-1.500 6.500 0L6.500 14c-2-1.500-4-1.500-6.500 0z" fill="#3c78d8" />
          <path d="M8 10c2.500 1.500 5 1.500 7.500 0L15 14.500c-2.500 1.500-5 1.500-7.500 0z" fill="#f0c030" />
        </svg>
        开始
      </button>
      <button aria-label="快速启动" className="ml-[13px]">
        <svg width="18" height="18" viewBox="0 0 18 18">
          <circle cx="5" cy="5" r="4" fill="#68a8e0" stroke="#3870b0" />
          <circle cx="13" cy="5" r="4" fill="#f0b048" stroke="#c07820" />
          <circle cx="5" cy="13" r="4" fill="#e06868" stroke="#b03838" />
          <circle cx="13" cy="13" r="4" fill="#78c078" stroke="#388848" />
        </svg>
      </button>
      <div className="ml-5 h-5 w-px bg-[#a09c90]" />
      <svg width="14" height="14" viewBox="0 0 14 14" className="ml-2" aria-label="键盘">
        <path d="M1 6.500h12v7H1zM6 6V3.500h3V1" fill="none" stroke="#202020" />
        <path d="M2 8.500h10M2 10.500h10M4 12.500h6" stroke="#202020" strokeDasharray="1 1" />
      </svg>
      <div className="ml-[7px] h-5 w-px bg-[#a09c90]" />
      <button className={`${TASK} ml-[5px] border-b-[#807c70] border-l-white border-r-[#807c70] border-t-white`}>
        <svg width="16" height="16" viewBox="0 0 16 16" className="shrink-0">
          <path d="M14 8.500H4.500c.5 4 5 5 8 2.500C10 17 1 15.500 1.500 8 2 1 14-.500 14 8.500zM4.500 7H11C10.500 3 5 3 4.500 7z" fill="#40b038" />
          <path d="M2 13C-1 8 8 0 15 1" fill="none" stroke="#78d060" strokeWidth="1.500" />
        </svg>
        【通达信】一个短...
      </button>
      <button className={`${TASK} ml-[3px] border-b-white border-l-[#605c50] border-r-white border-t-[#605c50] bg-[#f8f7f0]`}>
        <svg width="17" height="17" viewBox="0 0 17 17" className="shrink-0">
          <path d="M0 0h17v17H0z" fill="#882838" />
          <path d="M3 17C3 8 7 3 16 2C10 5 8 8 7 17zM9 8h6v2c-3 0-3 3-3 7h-2c0-4 1-6-1-9z" fill="#f4e8e8" />
        </svg>
        <span className="-ml-1 whitespace-nowrap">中原证券集成版V5...</span>
      </button>
      <button className={`${TASK} ml-[3px] border-b-[#605c50] border-l-white border-r-[#605c50] border-t-white`}>
        <svg width="16" height="14" viewBox="0 0 16 14" className="shrink-0">
          <path d="M1 12V2h5l1.500 2H14v8z" fill="#f0c850" stroke="#a08020" />
          <path d="M1 12l2.500-6h12L13 12z" fill="#fce890" stroke="#a08020" />
        </svg>
        <span className="-ml-1 whitespace-nowrap">E:\私用指标\私用指标</span>
      </button>
      <div className="ml-auto mr-[2px] flex h-6 w-[122px] items-center border border-b-white border-l-[#908c80] border-r-white border-t-[#908c80] pl-1">
        <button className="text-[15px] leading-none">«</button>
        <svg width="54" height="16" viewBox="0 0 54 16" className="ml-1">
          <path d="M6 1h8v7H6zM1 5h9v7H1z" fill="#88b8f0" stroke="#3060a8" />
          <path d="M3 14h6M10 10h4" stroke="#506890" strokeWidth="2" />
          <path d="M19 0h15v16H19z" fill="#28a0e0" />
          <circle cx="24" cy="9" r="2.500" fill="none" stroke="#fff" strokeWidth="1.500" />
          <path d="M26 7c1-4 5-3 4 0 3 1 1 5-1 4" fill="none" stroke="#fff" strokeWidth="1.500" />
          <circle cx="45" cy="7.500" r="7" fill="#98c820" />
          <path d="M40 5h6V2l6 5-6 5V9h-6z" fill="#205010" />
          <path d="M46 9h7v6h-7z" fill="#f0b030" stroke="#906010" />
        </svg>
        <time className="ml-2 font-['Liberation_Mono','Noto_Sans_CJK_SC',monospace] text-[12px]">17:44</time>
      </div>
    </footer>
  );
}

/* ---------- overlays ---------- */

const PETALS: [number, string][] = [[-40, '#3890d0'], [15, '#f0c820'], [72, '#a060a8'], [130, '#58b888'], [190, '#e86878'], [255, '#38b090']];

function Watermark() {
  return (
    <div className="absolute right-0 top-0 flex h-[57px] w-[202px] items-center bg-[#08080a]/85">
      <svg width="54" height="54" viewBox="-27 -27 54 54" className="shrink-0">
        {PETALS.map(([angle, color]) => (
          <g key={angle} transform={`rotate(${angle})`}>
            <path d="M0-2C-13-10-12-26 0-26S13-10 0-2z" fill={color} />
            <path d="M0-6C-8-12-8-22 0-22S8-12 0-6z" fill="#fff" opacity=".6" />
          </g>
        ))}
        <circle r="2.500" fill="#6a4a60" />
      </svg>
      <div className="flex flex-col items-center gap-[3px] pl-[6px]">
        <span className="bg-gradient-to-b from-[#f8b848] to-[#f05010] bg-clip-text text-[22px] font-black leading-[24px] text-transparent">分析家公式网</span>
        <span className="font-['DejaVu_Sans',sans-serif] text-[15px] font-bold italic leading-[18px] text-[#f8e430]">www.88gs.com</span>
      </div>
    </div>
  );
}

function UpdateNotice() {
  return (
    <div className="absolute bottom-[30px] right-0 h-[81px] w-[185px] overflow-hidden bg-[#222] text-[13px] leading-none">
      <p className="pl-[9px] pt-[7px] text-[#e8e8e8]">更新提醒</p>
      <p className="whitespace-nowrap pl-[13px] pt-[21px] text-[#808080]">芒果TV可更新至4.2.0.111</p>
      <div className="flex justify-end gap-2 pr-3 pt-[12px] text-white">
        <button>立即更新</button>
        <button>不再提醒</button>
      </div>
    </div>
  );
}

const MACD_MINORS = [562.5, 588.5, 615.5];

export default function App() {
  return (
    <div className="relative flex h-screen flex-col overflow-hidden bg-black font-['Liberation_Sans','Noto_Sans_CJK_SC',sans-serif] text-[12px]">
      <MenuBar />
      <main className="flex min-h-0 flex-1 border-l-2 border-[#807c74]">
        <div className="flex min-w-0 flex-1 flex-col">
          <div className="grid min-h-0 flex-1 grid-rows-[469fr_147fr_154fr_154fr]">
            <Panel
              tall
              legend={PRICE_LEGEND}
              extra={
                <svg width="24" height="12" viewBox="0 0 24 12" className="ml-auto mr-[2px]" fill="none" stroke="#a02020">
                  <path d="M5 1l4 5-4 5-4-5zM14.500 1.500h8v9h-8zM19.500 1.500v9" />
                </svg>
              }
              chart={<PriceChart />}
              axis={<Axis top={22} height={468} labels={PRICE_LEVELS} minors={PRICE_TICKS} />}
            />
            <Panel legend={MACD_LEGEND} chart={<MacdChart />} axis={<Axis top={491} height={146} labels={[{ y: 535.5, label: '0.50' }]} minors={MACD_MINORS} />} />
            <Panel
              legend={STRENGTH_LEGEND}
              chart={<StrengthChart />}
              axis={
                <Axis
                  top={638}
                  height={153}
                  active
                  labels={[
                    { y: 655.5, label: '100.0' },
                    { y: 683.5, label: '80.00' },
                    { y: 711.5, label: '60.00' },
                    { y: 765.5, label: '20.00' },
                  ]}
                  minors={[669.5, 697.5, 724.5, 752.5]}
                />
              }
            />
            <Panel
              legend={FAST_LEGEND}
              chart={<FastChart />}
              axis={
                <Axis
                  top={792}
                  height={153}
                  labels={[
                    { y: 828.5, label: '150.0' },
                    { y: 866.5, label: '100.0' },
                    { y: 904.5, label: '50.00' },
                  ]}
                  minors={[847.5, 885.5, 923.5]}
                />
              }
            />
          </div>
          <DateAxis />
          <TabRows />
        </div>
        <QuotePanel />
        <ToolStrip />
      </main>
      <StatusBar />
      <Taskbar />
      <Watermark />
      <UpdateNotice />
      <div className="absolute bottom-[70px] right-[-30px] flex h-12 w-12 items-center rounded-full border-2 border-[#d8f0d8] bg-[#40b058] pl-[3px] text-[12px] font-bold text-white">60</div>
    </div>
  );
}
